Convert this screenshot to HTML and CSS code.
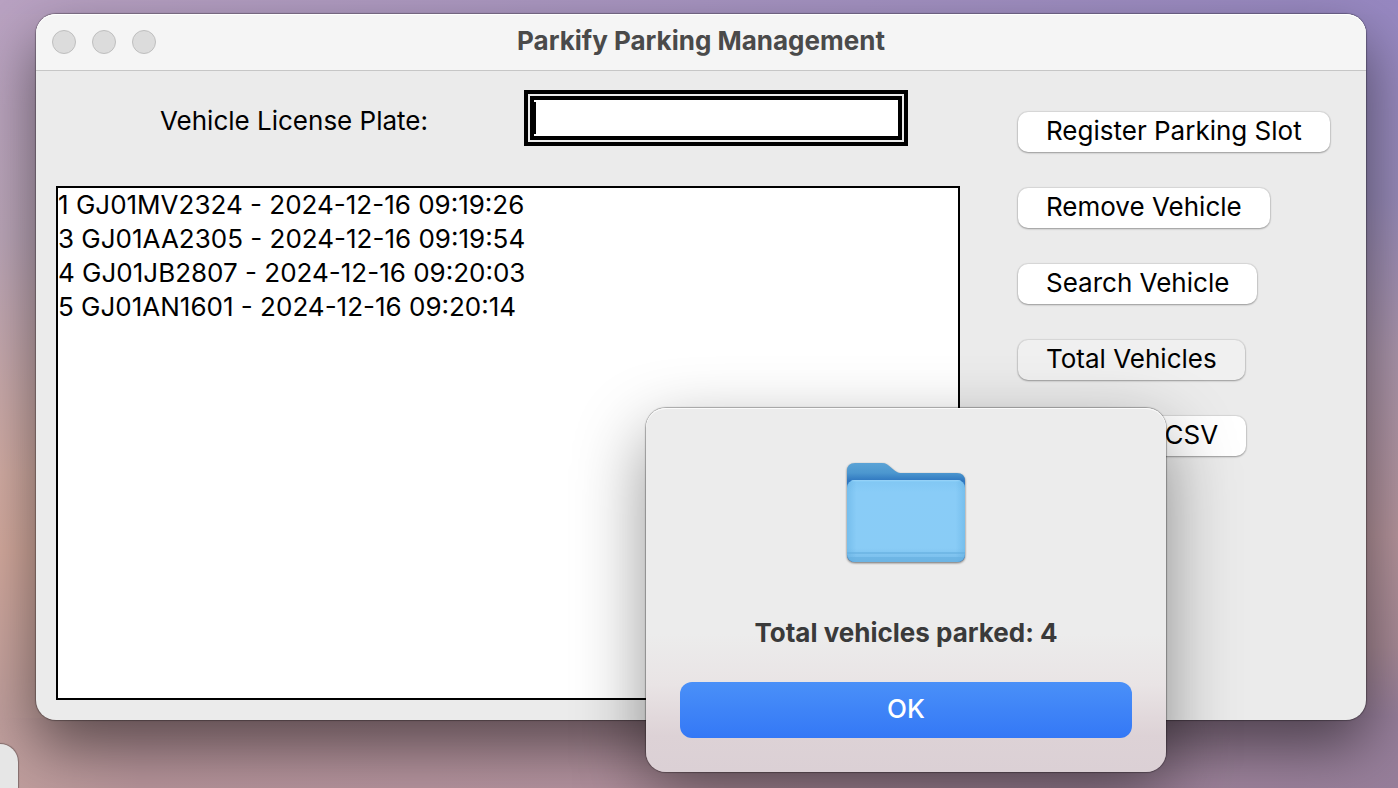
FILE: index.html
```html
<!DOCTYPE html>
<html lang="en">
<head>
<meta charset="utf-8">
<title>Parkify Parking Management</title>
<link rel="stylesheet" href="styles.css">
</head>
<body>
<div class="desktop">
  <main class="window">
    <header class="titlebar">
      <div class="traffic">
        <button class="light" type="button" aria-label="Close"></button>
        <button class="light" type="button" aria-label="Minimize"></button>
        <button class="light" type="button" aria-label="Zoom"></button>
      </div>
      <h1 class="title">Parkify Parking Management</h1>
    </header>
    <div class="content">
      <section class="records">
        <div class="plate-row">
          <label for="plate">Vehicle License Plate:</label>
          <input class="plate" id="plate" type="text">
        </div>
        <ul class="list">
          <li>1 GJ01MV2324 - 2024-12-16 09:19:26</li>
          <li>3 GJ01AA2305 - 2024-12-16 09:19:54</li>
          <li>4 GJ01JB2807 - 2024-12-16 09:20:03</li>
          <li>5 GJ01AN1601 - 2024-12-16 09:20:14</li>
        </ul>
      </section>
      <nav class="actions">
        <button class="action" type="button">Register Parking Slot</button>
        <button class="action" type="button">Remove Vehicle</button>
        <button class="action" type="button">Search Vehicle</button>
        <button class="action pressed" type="button">Total Vehicles</button>
        <button class="action" type="button">Export to CSV</button>
      </nav>
    </div>
  </main>
  <div class="dialog" role="alertdialog" aria-labelledby="message">
    <svg class="folder" viewBox="0 0 128 112" aria-hidden="true">
      <defs>
        <linearGradient id="back" x1="0" y1="0" x2="0" y2="1">
          <stop offset="0" stop-color="#5ba3d6"/>
          <stop offset=".1" stop-color="#4c97cf"/>
          <stop offset=".18" stop-color="#2f77c0"/>
          <stop offset="1" stop-color="#2f77c0"/>
        </linearGradient>
        <linearGradient id="front" x1="0" y1="0" x2="0" y2="1">
          <stop offset="0" stop-color="#8fd3fa"/>
          <stop offset=".03" stop-color="#82c8f4"/>
          <stop offset=".15" stop-color="#89ccf7"/>
          <stop offset=".83" stop-color="#89ccf6"/>
          <stop offset="1" stop-color="#76bbe9"/>
        </linearGradient>
        <linearGradient id="side" x1="0" y1="0" x2="1" y2="0">
          <stop offset="0" stop-color="#4a9ed6" stop-opacity=".3"/>
          <stop offset=".08" stop-color="#4a9ed6" stop-opacity="0"/>
          <stop offset=".92" stop-color="#4a9ed6" stop-opacity="0"/>
          <stop offset="1" stop-color="#4a9ed6" stop-opacity=".3"/>
        </linearGradient>
        <clipPath id="panel"><rect x="5" y="22" width="118" height="82" rx="8"/></clipPath>
      </defs>
      <path class="folder-back" fill="url(#back)" d="M5 13Q5 5 13 5H40C44 5 46 7 49 9.500C53 13 55 15 60 15H115Q123 15 123 23V96Q123 104 115 104H13Q5 104 5 96Z"/>
      <g clip-path="url(#panel)">
        <path fill="url(#front)" d="M5 22H123V104H5Z"/>
        <path fill="url(#side)" d="M5 22H123V104H5Z"/>
        <path fill="#94d1f7" d="M5 22H123V23H5Z"/>
        <path fill="#66afe0" opacity=".6" d="M5 94H123V96H5ZM5 99H123V104H5Z"/>
      </g>
    </svg>
    <p class="message" id="message">Total vehicles parked: 4</p>
    <button class="ok" type="button">OK</button>
  </div>
  <div class="behind"></div>
</div>
</body>
</html>
```
FILE: styles.css
```css
* {
  box-sizing: border-box;
}

body {
  margin: 0;
  font-family: Inter, "Liberation Sans", sans-serif;
  font-size: 26px;
  line-height: 34px;
  color: #000;
}

button,
input {
  font: inherit;
  color: inherit;
}

.desktop {
  position: relative;
  display: flex;
  min-height: 100vh;
  padding: 14px 32px 68px 36px;
  overflow: hidden;
  background:
    linear-gradient(to right, #b9a2c2, #9788c2) 0 0 / 100% 14px no-repeat,
    linear-gradient(to right, #c09f9d, #b59399 10%, #b1919f 50%, #967e9a) 0 100% / 100% 70px no-repeat,
    linear-gradient(to bottom, #9788c2 0, #978ab8 25%, #ab95ab 45%, #b5949c 68%, #a88a96 82%, #967e9a 91%) 100% 0 / 60px 100% no-repeat,
    linear-gradient(to bottom, #b9a2c2 0, #bba6b8 30%, #d2aca3 60%, #d3a99d 70%, #c09f9d 91%) 0 0 / 60px 100% no-repeat,
    #b1919f;
}

.window {
  flex: 1;
  display: flex;
  flex-direction: column;
  border-radius: 20px;
  background: #ebebeb;
  box-shadow: 0 0 1px 1px rgba(0, 0, 0, .3), 0 26px 60px rgba(0, 0, 0, .5);
}

.titlebar {
  display: grid;
  grid-template-columns: 1fr auto 1fr;
  align-items: center;
  height: 57px;
  padding: 0 16px;
  border-bottom: 1px solid #c6c6c6;
  border-radius: 20px 20px 0 0;
  background: #f5f5f5;
  box-shadow: inset 0 1px #fff;
}

.traffic {
  display: flex;
  gap: 16px;
}

.light {
  width: 24px;
  height: 24px;
  padding: 0;
  border: 1px solid #bfbfbf;
  border-radius: 50%;
  background: #dcdcdc;
}

.title {
  margin: 0;
  padding-bottom: 2px;
  font-size: 26px;
  font-weight: 700;
  color: #4a4a4a;
}

.content {
  flex: 1;
  display: grid;
  grid-template-columns: 1fr 310px;
  column-gap: 58px;
  padding: 19px 38px 20px 20px;
}

.records {
  display: flex;
  flex-direction: column;
  gap: 40px;
}

.plate-row {
  display: flex;
  justify-content: flex-end;
  align-items: center;
  gap: 102px;
  height: 56px;
  padding-right: 58px;
}

.plate-row label {
  padding-top: 6px;
}

.plate {
  width: 372px;
  height: 44px;
  padding: 0 4px;
  border: 4px solid #000;
  border-radius: 0;
  outline: 4px solid #000;
  outline-offset: 2px;
  background: linear-gradient(#000, #000) 0 2px / 2px 32px no-repeat #fff;
}

.list {
  flex: 1;
  margin: 0;
  padding: 0;
  border: 2px solid #000;
  background: #fff;
  list-style: none;
}

.actions {
  display: flex;
  flex-direction: column;
  align-items: flex-start;
  gap: 36px;
  padding-top: 22px;
}

.action {
  height: 40px;
  padding: 0 28px 2px;
  border: 0;
  border-radius: 10px;
  background: #fff;
  box-shadow: 0 0 1px 1px rgba(0, 0, 0, .08), 0 1px 2px rgba(0, 0, 0, .3);
  white-space: nowrap;
}

.pressed {
  background: #f0f0f0;
}

.dialog {
  position: absolute;
  top: 408px;
  left: 646px;
  display: flex;
  flex-direction: column;
  align-items: center;
  width: 520px;
  padding: 50px 34px 34px;
  border-radius: 20px;
  background: linear-gradient(to bottom, #ececec 0, #ececec 62%, #e9e4e5 76%, #ddd2d6 90%, #dbd0d5 100%);
  box-shadow: inset 0 1px rgba(255, 255, 255, .8), 0 0 1px 1px rgba(0, 0, 0, .3), 0 26px 70px rgba(0, 0, 0, .42);
}

.folder {
  width: 128px;
  height: 112px;
}

.folder-back {
  filter: drop-shadow(0 1px 1px rgba(0, 0, 0, .55));
}

.message {
  margin: 46px 0 32px;
  font-weight: 700;
  color: #3a3a3a;
}

.ok {
  width: 100%;
  height: 56px;
  padding: 0 0 2px;
  border: 0;
  border-radius: 12px;
  background: linear-gradient(#4a90f8, #3478f6);
  font-weight: 500;
  color: #fff;
}

.behind {
  position: absolute;
  bottom: 0;
  left: 0;
  width: 18px;
  height: 44px;
  border-radius: 0 18px 0 0;
  background: #e6e6e6;
  box-shadow: 0 0 1px 1px rgba(0, 0, 0, .3);
}
```
